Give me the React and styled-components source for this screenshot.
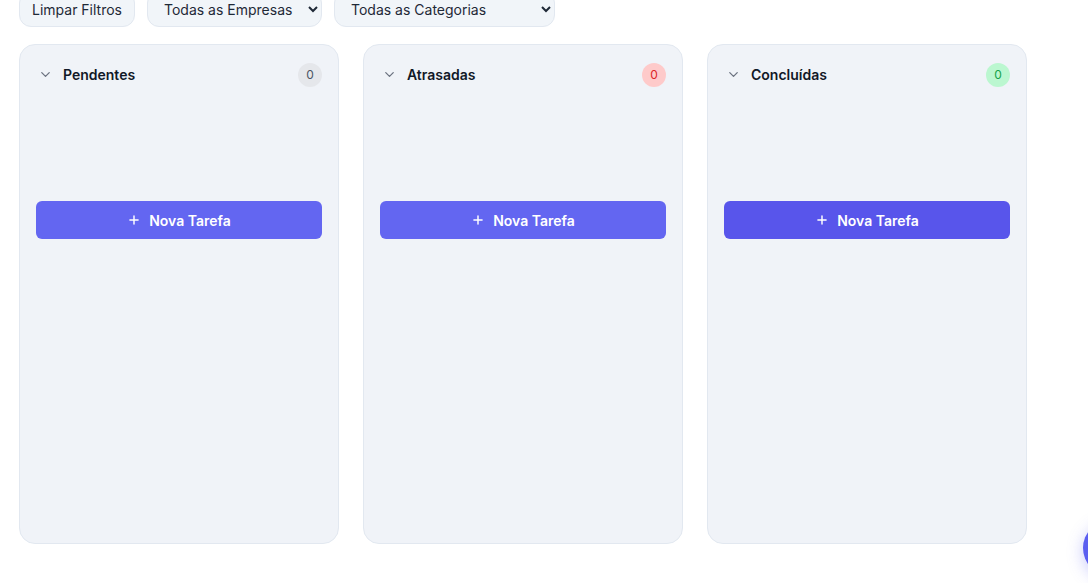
import React from "react";
import styled, { createGlobalStyle } from "styled-components";
import { ChevronDown, Plus } from "lucide-react";

const GlobalStyle = createGlobalStyle`
  html, body {
    margin: 0;
    background: #ffffff;
    font-family: Inter, "Noto Sans", sans-serif;
    overflow: hidden;
  }
`;

const columns = [
  { id: "pending", title: "Pendentes", tone: "gray", button: "#6366f1" },
  { id: "late", title: "Atrasadas", tone: "red", button: "#6366f1" },
  { id: "done", title: "Concluídas", tone: "green", button: "#5855eb" },
];

const badgeTones = {
  gray: { bg: "#e5e7eb", fg: "#4b5563" },
  red: { bg: "#fecaca", fg: "#dc2626" },
  green: { bg: "#bbf7d0", fg: "#16a34a" },
};

const App = () => {
  return (
    <>
      <GlobalStyle />
      <Page>
        <FilterBar>
          <FilterButton type="button">Limpar Filtros</FilterButton>
          <Select $width={175} defaultValue="all">
            <option value="all">Todas as Empresas</option>
          </Select>
          <Select $width={221} defaultValue="all">
            <option value="all">Todas as Categorias</option>
          </Select>
        </FilterBar>

        <Board>
          {columns.map((col) => (
            <Column key={col.id}>
              <ColumnHeader>
                <HeaderLeft>
                  <ChevronDown size={15} color="#6b7280" strokeWidth={2} />
                  <ColumnTitle>{col.title}</ColumnTitle>
                </HeaderLeft>
                <Badge $tone={col.tone}>0</Badge>
              </ColumnHeader>
              <EmptyList />
              <AddButton type="button" $bg={col.button}>
                <Plus size={14} strokeWidth={2.5} />
                Nova Tarefa
              </AddButton>
            </Column>
          ))}
        </Board>
      </Page>
      <Fab type="button" aria-label="Ajuda" />
    </>
  );
};

export default App;

const Page = styled.div`
  padding: 0 19px;
  margin-top: -9px;
`;

const FilterBar = styled.div`
  display: flex;
  align-items: center;
  gap: 12px;
  margin-bottom: 17px;
`;

const FilterButton = styled.button`
  height: 36px;
  padding: 0 12px;
  border: 1px solid #e2e8f0;
  border-radius: 12px;
  background: #f1f5f9;
  color: #1f2937;
  font-family: Inter, sans-serif;
  font-size: 14px;
  cursor: pointer;
`;

const Select = styled.select`
  height: 36px;
  width: ${(p) => p.$width}px;
  padding: 0 8px 0 12px;
  border: 1px solid #e2e8f0;
  border-radius: 12px;
  background: #f1f5f9;
  color: #1f2937;
  font-family: Inter, sans-serif;
  font-size: 14px;
  outline: none;
`;

const Board = styled.div`
  display: grid;
  grid-template-columns: repeat(3, 320px);
  gap: 24px;
`;

const Column = styled.div`
  box-sizing: border-box;
  height: 500px;
  padding: 16px;
  background: #f0f3f8;
  border: 1px solid #e2e8f0;
  border-radius: 16px;
  display: flex;
  flex-direction: column;
`;

const ColumnHeader = styled.div`
  height: 27px;
  display: flex;
  align-items: center;
  justify-content: space-between;
`;

const HeaderLeft = styled.div`
  display: flex;
  align-items: center;
  gap: 10px;
  padding-left: 2px;
`;

const ColumnTitle = styled.h3`
  margin: 0;
  font-size: 14px;
  font-weight: 600;
  color: #111827;
`;

const Badge = styled.span`
  width: 24px;
  height: 24px;
  border-radius: 50%;
  display: flex;
  align-items: center;
  justify-content: center;
  font-size: 12px;
  background: ${(p) => badgeTones[p.$tone].bg};
  color: ${(p) => badgeTones[p.$tone].fg};
`;

const EmptyList = styled.div`
  height: 113px;
`;

const AddButton = styled.button`
  height: 38px;
  width: 100%;
  border: none;
  border-radius: 6px;
  background: ${(p) => p.$bg};
  color: #ffffff;
  font-family: Inter, sans-serif;
  font-size: 14px;
  font-weight: 600;
  display: flex;
  align-items: center;
  justify-content: center;
  gap: 8px;
  cursor: pointer;
`;

const Fab = styled.button`
  position: fixed;
  left: 1083px;
  top: 520px;
  width: 56px;
  height: 56px;
  border-radius: 50%;
  border: none;
  background: #5b5ef0;
  box-shadow: 0 4px 16px rgba(99, 102, 241, 0.35);
`;
